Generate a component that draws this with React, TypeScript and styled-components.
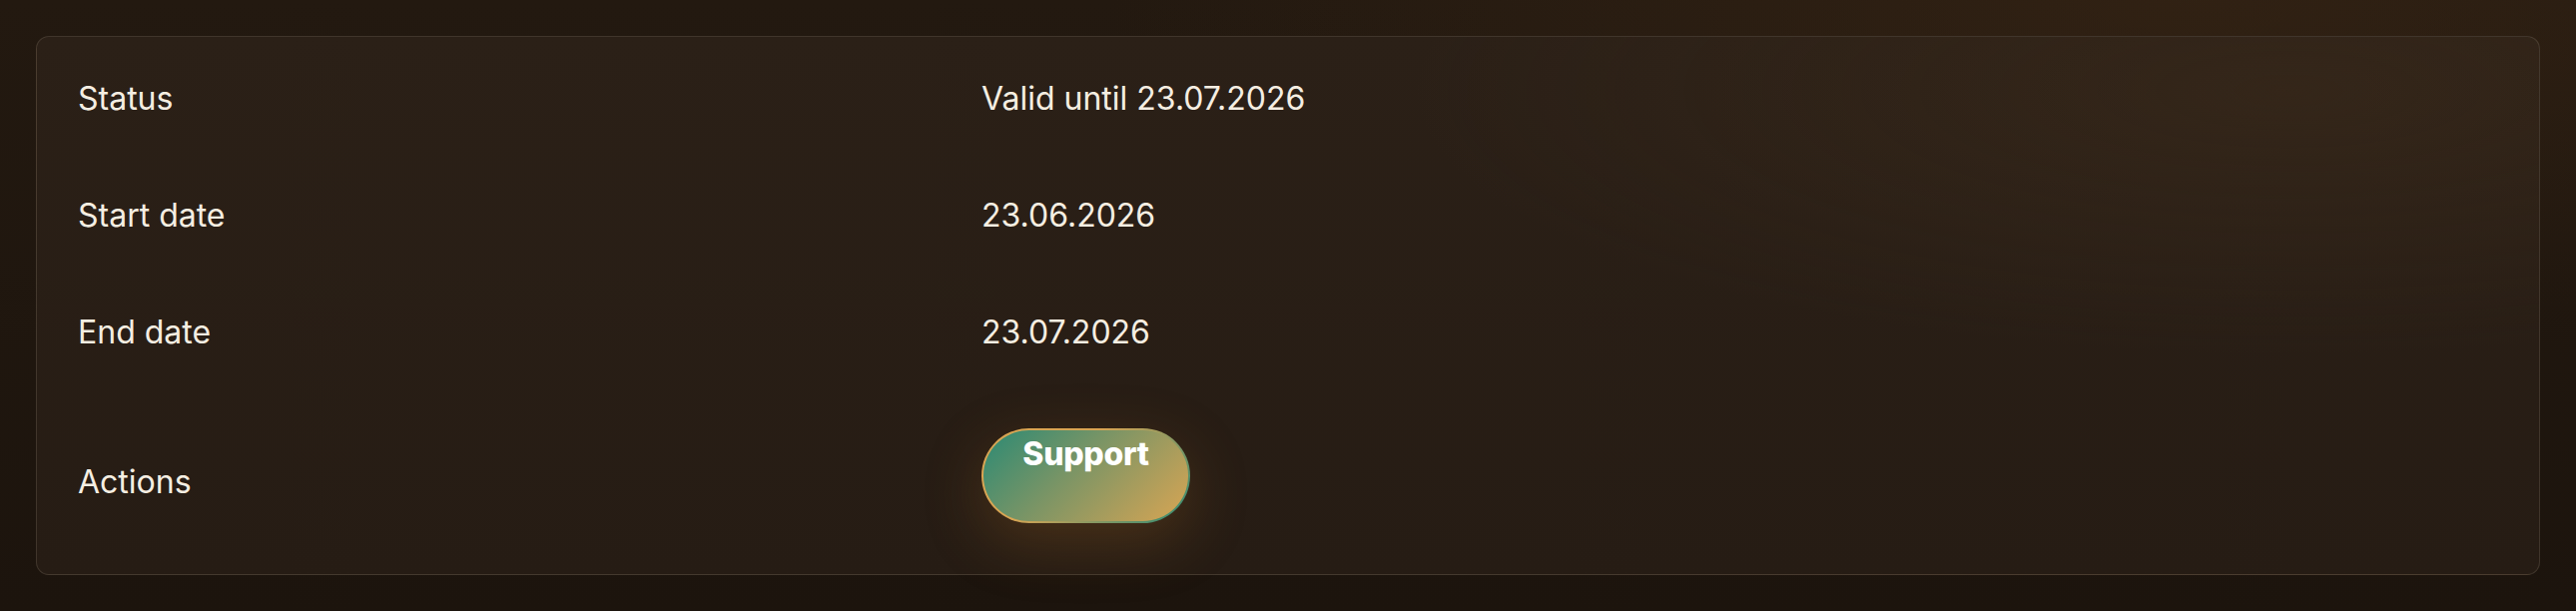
import React from 'react';
import styled, { createGlobalStyle } from 'styled-components';

const GlobalStyle = createGlobalStyle`
  html, body {
    margin: 0;
    padding: 0;
    background: #1e150e;
  }
  body {
    font-family: Inter, "Noto Sans", sans-serif;
    color: #f5eee2;
  }
`;

const SPage = styled.div`
  width: 2580px;
  height: 612px;
  box-sizing: border-box;
  padding: 36px;
  background:
    radial-gradient(ellipse 60% 80% at 85% 0%, rgba(60, 40, 22, 0.55), transparent 70%),
    linear-gradient(180deg, #231910 0%, #1c140d 100%);
`;

const SCard = styled.div`
  box-sizing: border-box;
  height: 540px;
  padding: 3px 0;
  border: 1.5px solid rgba(255, 236, 210, 0.12);
  border-radius: 13px;
  background:
    radial-gradient(ellipse 50% 70% at 90% 10%, rgba(70, 50, 30, 0.35), transparent 70%),
    linear-gradient(180deg, #2b2017 0%, #261c14 100%);
`;

const SRow = styled.div<{ $tall?: boolean }>`
  display: grid;
  grid-template-columns: 905px 1fr;
  align-items: center;
  box-sizing: border-box;
  height: ${(p) => (p.$tall ? '183px' : '117px')};
  padding: ${(p) => (p.$tall ? '38px 0 38px 41px' : '0 0 0 41px')};
  font-size: 32px;
  line-height: 42px;
`;

const SLabel = styled.div``;

const SValue = styled.div<{ $top?: boolean }>`
  ${(p) => (p.$top ? 'align-self: start;' : '')}
`;

const SButton = styled.button`
  display: flex;
  align-items: flex-start;
  justify-content: center;
  box-sizing: border-box;
  width: 209px;
  height: 95px;
  padding: 3px 0 0;
  border: 2px solid transparent;
  border-radius: 48px;
  background:
    linear-gradient(135deg, #2b8a74 0%, #7d9565 45%, #d9a553 100%) padding-box,
    linear-gradient(315deg, #2b8a74 0%, #d9a553 60%, #d9a553 100%) border-box;
  box-shadow: 0 18px 60px rgba(176, 112, 40, 0.26);
  color: #ffffff;
  font-family: Inter, "Noto Sans", sans-serif;
  font-size: 32px;
  font-weight: 800;
  line-height: 42px;
  letter-spacing: -0.3px;
  cursor: pointer;
`;

const rows = [
  { label: 'Status', value: 'Valid until 23.07.2026' },
  { label: 'Start date', value: '23.06.2026' },
  { label: 'End date', value: '23.07.2026' },
];

const App = () => {
  return (
    <>
      <GlobalStyle />
      <SPage>
        <SCard>
          {rows.map((r) => (
            <SRow key={r.label}>
              <SLabel>{r.label}</SLabel>
              <SValue>{r.value}</SValue>
            </SRow>
          ))}
          <SRow $tall>
            <SLabel>Actions</SLabel>
            <SValue $top>
              <SButton type="button">Support</SButton>
            </SValue>
          </SRow>
        </SCard>
      </SPage>
    </>
  );
};

export default App;
